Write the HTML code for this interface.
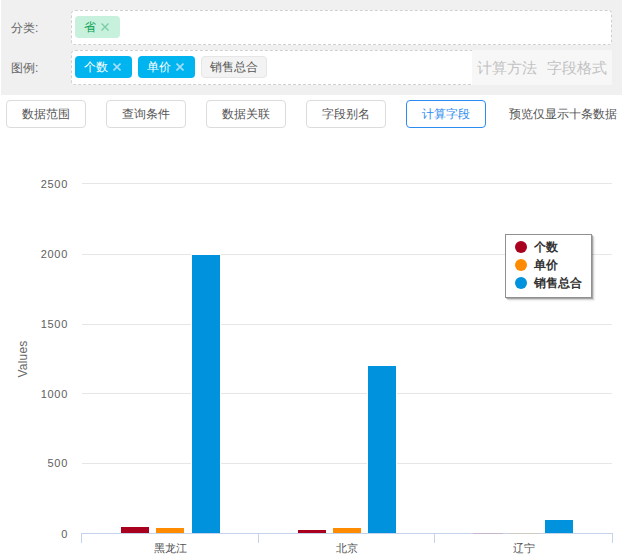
<!DOCTYPE html>
<html><head><meta charset="utf-8">
<style>
html,body{margin:0;padding:0;background:#fff;width:622px;height:558px;overflow:hidden;}
body{font-family:"Liberation Sans",sans-serif;position:relative;}
.a{position:absolute;white-space:nowrap;}
#panel{left:1px;top:0;width:621px;height:95px;background:#f0f0f0;}
.lbl{font-size:12px;color:#666;line-height:14px;}
.box{background:#fff;border:1px dashed #d0d0d0;box-sizing:border-box;border-radius:4px;}
.tag{height:22px;border-radius:4px;font-size:12px;line-height:22px;box-sizing:border-box;}
.tb{background:#00b4f0;color:#fff;}
.xi{position:absolute;top:7px;right:11px;}
.btn{width:80px;height:28px;border:1px solid #dcdcdc;border-radius:4px;box-sizing:border-box;font-size:12px;line-height:26px;text-align:center;color:#555;background:#fff;}
.yl{font-size:11px;color:#606060;text-align:right;width:40px;line-height:12px;letter-spacing:0.7px;}
.gl{left:82px;width:530px;height:1px;background:#e6e6e6;}
.bar{}
.xl{font-size:11px;color:#505050;line-height:12px;text-align:center;width:100px;}
</style></head><body>
<div id="panel" class="a"></div>
<div class="a lbl" style="left:11px;top:21px;">分类:</div>
<div class="a lbl" style="left:11px;top:61px;">图例:</div>
<div class="a box" style="left:71px;top:10px;width:541px;height:35px;"></div>
<div class="a tag" style="left:75px;top:16px;width:45px;background:#c7f0dd;color:#08a050;padding-left:9px;">省<svg class="xi" width="8" height="8" viewBox="0 0 8 8"><path d="M0.5 0.5L7.5 7.5M7.5 0.5L0.5 7.5" stroke="#78cba2" stroke-width="1.3"/></svg></div>
<div class="a box" style="left:71px;top:50px;width:541px;height:35px;"></div>
<div class="a tag tb" style="left:75px;top:56px;width:57px;padding-left:9px;">个数<svg class="xi" width="8" height="8" viewBox="0 0 8 8"><path d="M0.5 0.5L7.5 7.5M7.5 0.5L0.5 7.5" stroke="#a6def7" stroke-width="1.6"/></svg></div>
<div class="a tag tb" style="left:138px;top:56px;width:57px;padding-left:9px;">单价<svg class="xi" width="8" height="8" viewBox="0 0 8 8"><path d="M0.5 0.5L7.5 7.5M7.5 0.5L0.5 7.5" stroke="#a6def7" stroke-width="1.6"/></svg></div>
<div class="a tag" style="left:201px;top:56px;width:66px;background:#f3f3f3;border:1px solid #e6e6e6;color:#555;line-height:20px;padding-left:8px;">销售总合</div>
<div class="a" style="left:472px;top:50px;width:140px;height:35px;background:#f7f7f7;"></div>
<div class="a" style="left:477px;top:59px;font-size:15px;line-height:17px;color:#c2c2c2;">计算方法</div>
<div class="a" style="left:547px;top:59px;font-size:15px;line-height:17px;color:#c2c2c2;">字段格式</div>

<div class="a btn" style="left:6px;top:100px;">数据范围</div>
<div class="a btn" style="left:106px;top:100px;">查询条件</div>
<div class="a btn" style="left:206px;top:100px;">数据关联</div>
<div class="a btn" style="left:306px;top:100px;">字段别名</div>
<div class="a btn" style="left:406px;top:100px;border-color:#2d8cf0;color:#2d8cf0;">计算字段</div>
<div class="a" style="left:509px;top:107px;font-size:12px;line-height:14px;color:#555;">预览仅显示十条数据</div>

<!-- chart -->
<div class="a gl" style="top:183px;"></div>
<div class="a gl" style="top:254px;"></div>
<div class="a gl" style="top:324px;"></div>
<div class="a gl" style="top:393px;"></div>
<div class="a gl" style="top:463px;"></div>
<div class="a yl" style="left:28px;top:178px;">2500</div>
<div class="a yl" style="left:28px;top:248px;">2000</div>
<div class="a yl" style="left:28px;top:318px;">1500</div>
<div class="a yl" style="left:28px;top:388px;">1000</div>
<div class="a yl" style="left:28px;top:457px;">500</div>
<div class="a yl" style="left:28px;top:528px;">0</div>
<div class="a" style="left:0px;top:352px;width:46px;text-align:center;transform:rotate(-90deg);font-size:12px;line-height:14px;color:#666;letter-spacing:0.2px;">Values</div>

<div class="a" style="left:121px;top:527px;width:28px;height:6px;background:#a8001e;"></div>
<div class="a" style="left:156px;top:528px;width:28px;height:5px;background:#ff8c00;"></div>
<div class="a" style="left:191px;top:254px;width:30px;height:279px;background:#fff;"></div>
<div class="a" style="left:192px;top:255px;width:28px;height:278px;background:#0092dc;"></div>

<div class="a" style="left:298px;top:530px;width:28px;height:3px;background:#a8001e;"></div>
<div class="a" style="left:333px;top:528px;width:28px;height:5px;background:#ff8c00;"></div>
<div class="a" style="left:367px;top:365px;width:30px;height:168px;background:#fff;"></div>
<div class="a" style="left:368px;top:366px;width:28px;height:167px;background:#0092dc;"></div>

<div class="a" style="left:545px;top:520px;width:28px;height:13px;background:#0092dc;"></div>

<div class="a" style="left:81px;top:533px;width:532px;height:1px;background:#c4d2ea;"></div>
<div class="a" style="left:81px;top:533px;width:1px;height:10px;background:#c4d2ea;"></div>
<div class="a" style="left:258px;top:533px;width:1px;height:10px;background:#c4d2ea;"></div>
<div class="a" style="left:434px;top:533px;width:1px;height:10px;background:#c4d2ea;"></div>
<div class="a" style="left:612px;top:533px;width:1px;height:10px;background:#c4d2ea;"></div>
<div class="a" style="left:473px;top:533px;width:30px;height:1px;background:#c8b6cc;"></div>
<div class="a" style="left:509px;top:533px;width:30px;height:1px;background:#cdcbc4;"></div>
<div class="a xl" style="left:120px;top:542px;">黑龙江</div>
<div class="a xl" style="left:297px;top:542px;">北京</div>
<div class="a xl" style="left:474px;top:542px;">辽宁</div>

<!-- legend -->
<div class="a" style="left:505px;top:234px;width:87px;height:64px;box-sizing:border-box;border:1px solid #909090;background:#fff;box-shadow:1px 1px 0 rgba(0,0,0,0.22),2px 2px 1px rgba(0,0,0,0.12),3px 3px 2px rgba(0,0,0,0.05);"></div>
<div class="a" style="left:515px;top:241px;width:12px;height:12px;border-radius:6px;background:#a8001e;"></div>
<div class="a" style="left:515px;top:259px;width:12px;height:12px;border-radius:6px;background:#ff8c00;"></div>
<div class="a" style="left:515px;top:277px;width:12px;height:12px;border-radius:6px;background:#0092dc;"></div>
<div class="a" style="left:534px;top:240px;font-size:12px;font-weight:bold;line-height:14px;color:#333;">个数</div>
<div class="a" style="left:534px;top:258px;font-size:12px;font-weight:bold;line-height:14px;color:#333;">单价</div>
<div class="a" style="left:534px;top:276px;font-size:12px;font-weight:bold;line-height:14px;color:#333;">销售总合</div>
</body></html>
